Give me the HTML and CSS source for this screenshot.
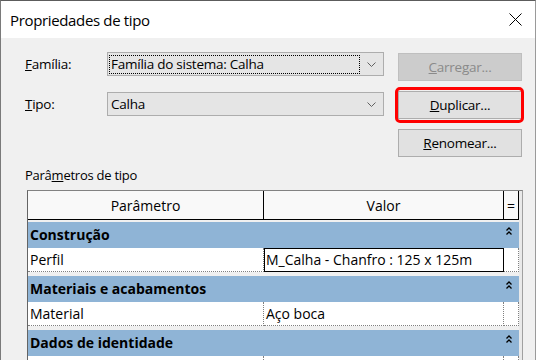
FILE: index.html
```html
<!DOCTYPE html>
<html lang="pt">
<head>
    <meta charset="UTF-8">
    <title>Propriedades de tipo</title>
    <link rel="stylesheet" href="styles.css">
</head>
<body>
    <div class="window">
        <div class="titlebar">
            <span class="title">Propriedades de tipo</span>
            <svg class="close" width="13" height="13" viewBox="0 0 13 13">
                <path d="M0.5 0.5 L12.5 12.5 M12.5 0.5 L0.5 12.5" stroke="#000" stroke-width="1" fill="none"/>
            </svg>
        </div>

        <div class="content">
            <div class="form">
                <div class="fields">
                    <div class="field">
                        <span class="lbl"><u>F</u>amília:</span>
                        <div class="combo">
                            <span class="combo-text focus">Família do sistema: Calha</span>
                            <span class="chev">
                                <svg width="9" height="5" viewBox="0 0 9 5"><path d="M0.5 0.5 L4.5 4.5 L8.5 0.5" stroke="#606060" fill="none"/></svg>
                            </span>
                        </div>
                    </div>
                    <div class="field">
                        <span class="lbl"><u>T</u>ipo:</span>
                        <div class="combo">
                            <span class="combo-text">Calha</span>
                            <span class="chev">
                                <svg width="9" height="5" viewBox="0 0 9 5"><path d="M0.5 0.5 L4.5 4.5 L8.5 0.5" stroke="#606060" fill="none"/></svg>
                            </span>
                        </div>
                    </div>
                </div>

                <div class="buttons">
                    <button class="btn" disabled><u>C</u>arregar...</button>
                    <div class="highlight">
                        <button class="btn"><u>D</u>uplicar...</button>
                    </div>
                    <button class="btn"><u>R</u>enomear...</button>
                </div>
            </div>

            <div class="section">Parâ<u>m</u>etros de tipo</div>

            <div class="grid">
                <div class="row head">
                    <div class="cell">Parâmetro</div>
                    <div class="cell">Valor</div>
                    <div class="cell">=</div>
                </div>
                <div class="gap first"></div>

                <div class="row group">
                    <div class="group-name">Construção</div>
                    <div class="collapse">
                        <svg width="6" height="8" viewBox="0 0 6 8"><path d="M0.5 3.5 L3 1 L5.5 3.5 M0.5 7.5 L3 5 L5.5 7.5" stroke="#000" stroke-width="1.3" fill="none"/></svg>
                    </div>
                </div>
                <div class="row data">
                    <div class="cell">Perfil</div>
                    <div class="cell edit">M_Calha - Chanfro : 125 x 125m</div>
                    <div class="cell"></div>
                </div>
                <div class="gap"></div>

                <div class="row group">
                    <div class="group-name">Materiais e acabamentos</div>
                    <div class="collapse">
                        <svg width="6" height="8" viewBox="0 0 6 8"><path d="M0.5 3.5 L3 1 L5.5 3.5 M0.5 7.5 L3 5 L5.5 7.5" stroke="#000" stroke-width="1.3" fill="none"/></svg>
                    </div>
                </div>
                <div class="row data">
                    <div class="cell">Material</div>
                    <div class="cell">Aço boca</div>
                    <div class="cell"></div>
                </div>
                <div class="gap"></div>

                <div class="row group">
                    <div class="group-name">Dados de identidade</div>
                    <div class="collapse">
                        <svg width="6" height="8" viewBox="0 0 6 8"><path d="M0.5 3.5 L3 1 L5.5 3.5 M0.5 7.5 L3 5 L5.5 7.5" stroke="#000" stroke-width="1.3" fill="none"/></svg>
                    </div>
                </div>
                <div class="row data">
                    <div class="cell"></div>
                    <div class="cell"></div>
                    <div class="cell"></div>
                </div>
            </div>
        </div>
    </div>
</body>
</html>
```

FILE: styles.css
```css
body {
    margin: 0;
    font-family: 'Open Sans', 'Noto Sans', sans-serif;
    font-size: 13.5px;
    letter-spacing: -0.25px;
    color: #000;
    background-color: #f0f0f0;
}

.window {
    width: 536px;
    height: 360px;
    box-sizing: border-box;
    border-top: 1px solid #5c5c5c;
    border-left: 1px solid #7a7a7a;
    border-right: 1px solid #9a9a9a;
    background-color: #f0f0f0;
    overflow: hidden;
}

.titlebar {
    height: 37px;
    background-color: #fff;
    display: flex;
    align-items: center;
    justify-content: space-between;
    padding: 0 13px 0 9px;
}

.title {
    font-size: 15px;
    letter-spacing: -0.35px;
}

.content {
    padding: 14px 0 0 24px;
}

/* top part: labels + combos on the left, buttons on the right */
.form {
    display: flex;
    gap: 14px;
}

.fields {
    width: 359px;
    display: flex;
    flex-direction: column;
    gap: 16px;
}

.field {
    display: flex;
}

.lbl {
    width: 82px;
    flex-shrink: 0;
    line-height: 24px;
}

.combo {
    width: 277px;
    height: 24px;
    box-sizing: border-box;
    border: 1px solid #adadad;
    background-color: #e5e5e5;
    display: flex;
}

.combo-text {
    flex: 1;
    margin: 2px 0 1px 1px;
    border: 1px dotted transparent;
    padding-left: 1px;
    line-height: 17px;
    white-space: nowrap;
}

.combo-text.focus {
    border-color: #000;
}

.chev {
    width: 23px;
    display: flex;
    align-items: center;
    justify-content: center;
}

.buttons {
    width: 124px;
    padding-top: 1px;
    display: flex;
    flex-direction: column;
    gap: 10px;
}

.btn {
    width: 124px;
    height: 28px;
    padding: 0;
    border: 1px solid #adadad;
    background-color: #e1e1e1;
    font: inherit;
    letter-spacing: inherit;
    color: #000;
}

.btn:disabled {
    background-color: #cccccc;
    border-color: #bfbfbf;
    color: #8a8a8a;
}

.highlight {
    position: relative;
    height: 28px;
}

/* red annotation box round Duplicar */
.highlight::after {
    content: "";
    position: absolute;
    left: -3px;
    right: -2px;
    top: -4px;
    bottom: -4px;
    border: 3px solid #f00;
    border-radius: 5px;
}

.section {
    margin-top: 9px;
    font-size: 13px;
    line-height: 18px;
}

/* parameter table */
.grid {
    width: 496px;
    height: 200px;
    box-sizing: border-box;
    margin: 6px 0 0 2px;
    border-top: 1px solid #828282;
    border-left: 1px solid #646464;
    border-right: 1px solid #a0a0a0;
    padding-right: 3px;
    background-color: #e9e9e9;
    font-size: 14px;
    letter-spacing: 0;
}

.row {
    display: grid;
    grid-template-columns: 236px 240px 15px;
}

.head .cell {
    height: 29px;
    box-sizing: border-box;
    border-right: 1px solid #000;
    border-bottom: 1px solid #000;
    background-color: #f9f9f9;
    display: flex;
    align-items: center;
    justify-content: center;
}

.gap {
    height: 4px;
    background-color: #f0f0f0;
}

.gap.first {
    height: 2px;
}

.group {
    height: 26px;
    background-color: #8fb4d6;
    font-weight: bold;
}

.group-name {
    grid-column: span 2;
    padding-left: 2px;
    line-height: 26px;
}

.collapse {
    padding: 5px 0 0 2px;
}

.collapse svg {
    display: block;
}

.data .cell {
    height: 24px;
    box-sizing: border-box;
    background-color: #fff;
    border-right: 1px dotted #808080;
    border-bottom: 1px dotted #808080;
    padding-left: 2px;
    line-height: 23px;
    white-space: nowrap;
    overflow: hidden;
}

.data .cell.edit {
    border: 1px solid #000;
    padding-left: 1px;
    line-height: 21px;
}
```
